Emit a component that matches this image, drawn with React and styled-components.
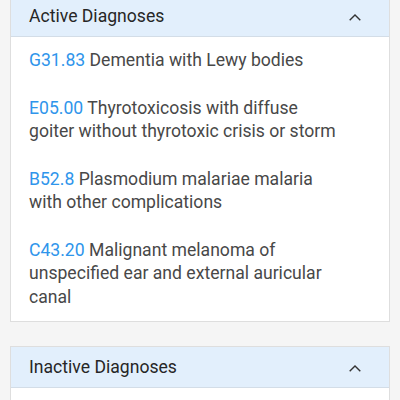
import React from "react";
import styled, { createGlobalStyle } from "styled-components";

const GlobalStyle = createGlobalStyle`
  html, body {
    margin: 0;
    padding: 0;
    background: #f5f5f5;
    font-family: Roboto, "Noto Sans", "Liberation Sans", sans-serif;
  }
`;

const Page = styled.div`
  display: flex;
  flex-direction: column;
  gap: 24px;
  padding: 0 10px 24px;
  margin-top: -5px;
`;

const Card = styled.section`
  background: #ffffff;
  border: 1px solid #dedede;
`;

const Header = styled.div`
  display: flex;
  align-items: center;
  justify-content: space-between;
  height: 40px;
  padding: 0 28px 0 18px;
  background: #e2effc;
  border-bottom: 1px solid #d3dde7;
  font-size: 17.6px;
  color: #262626;
`;

const Chevron = styled.svg`
  width: 12px;
  height: 7px;
  margin-top: 3px;
`;

const List = styled.ul`
  list-style: none;
  margin: 0;
  padding: 0;
  min-height: ${(p) => (p.$empty ? "48px" : "0")};
`;

const Item = styled.li`
  padding: 12px 48px 12px 18px;
  font-size: 17.6px;
  line-height: 23.5px;
  color: #484848;
`;

const Code = styled.span`
  color: #2f95eb;
`;

const active = [
  { code: "G31.83", name: "Dementia with Lewy bodies" },
  { code: "E05.00", name: "Thyrotoxicosis with diffuse goiter without thyrotoxic crisis or storm" },
  { code: "B52.8", name: "Plasmodium malariae malaria with other complications" },
  { code: "C43.20", name: "Malignant melanoma of unspecified ear and external auricular canal" },
];

const Section = ({ title, items }) => (
  <Card>
    <Header>
      <span>{title}</span>
      <Chevron viewBox="0 0 12 7">
        <polyline points="0.7,6.3 6,1 11.3,6.3" fill="none" stroke="#333" strokeWidth="1.4" />
      </Chevron>
    </Header>
    <List $empty={items.length === 0}>
      {items.map((d) => (
        <Item key={d.code}>
          <Code>{d.code}</Code> {d.name}
        </Item>
      ))}
    </List>
  </Card>
);

const App = () => (
  <>
    <GlobalStyle />
    <Page>
      <Section title="Active Diagnoses" items={active} />
      <Section title="Inactive Diagnoses" items={[]} />
    </Page>
  </>
);

export default App;
